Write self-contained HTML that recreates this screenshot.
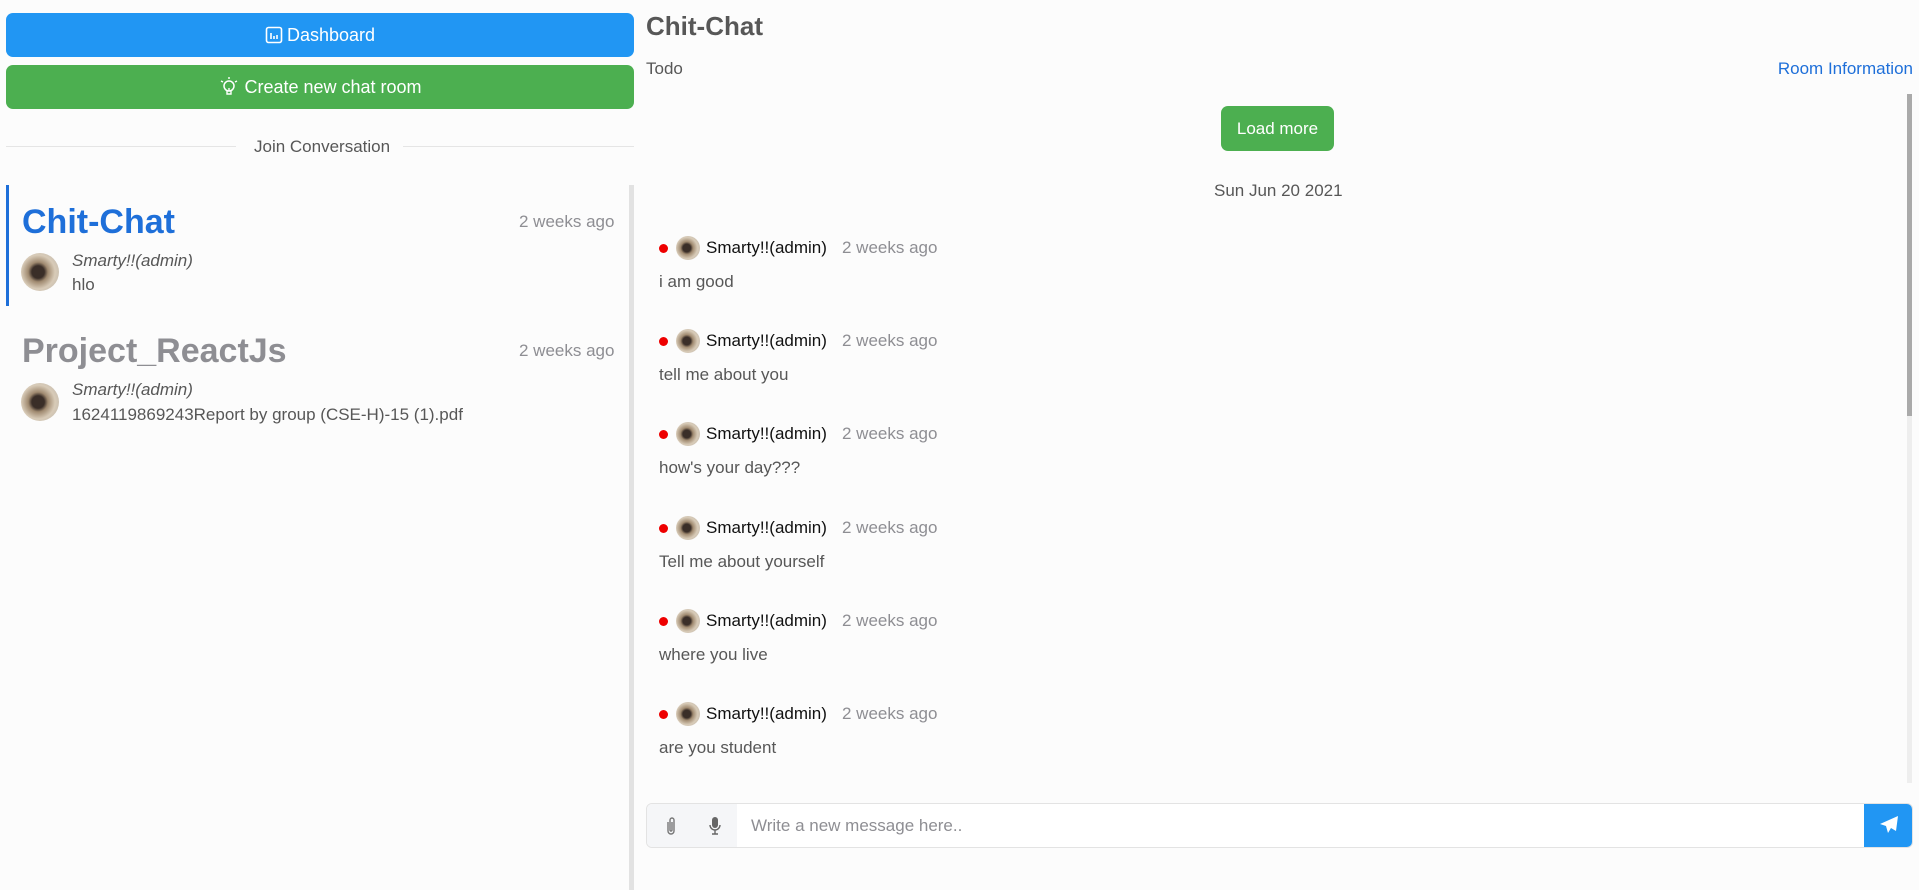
<!DOCTYPE html>
<html><head><meta charset="utf-8"><style>
*{box-sizing:border-box;margin:0;padding:0}
body{width:1919px;height:890px;background:#fcfcfc;font-family:"Liberation Sans",sans-serif;color:#575757;position:relative;overflow:hidden}
.abs{position:absolute}
.btn{position:absolute;left:6px;width:628px;height:44px;border-radius:7px;color:#fff;font-size:18px;display:flex;align-items:center;justify-content:center;gap:4px}
.av{position:absolute;border-radius:50%;background:radial-gradient(circle at 45% 50%,#3a2e28 0 22%,#a08a70 35%,#d8cbb8 60%,#b9b2a8 100%)}
.t{position:absolute;white-space:nowrap}
.dot{position:absolute;width:9px;height:9px;border-radius:50%;background:#e00}
</style></head><body>
<div class="btn" style="top:13px;background:#2196f3"><svg width="18" height="18" viewBox="0 0 18 18"><rect x="1.5" y="1.5" width="15" height="15" rx="2" fill="none" stroke="#fff" stroke-width="1.6"/><path d="M6 7v6M9 10v3M12 9v4" stroke="#fff" stroke-width="1.6"/></svg>Dashboard</div>
<div class="btn" style="top:65px;background:#4caf50"><svg width="22" height="22" viewBox="0 0 22 22"><circle cx="11" cy="10" r="5" fill="none" stroke="#fff" stroke-width="1.5"/><path d="M9 15v3h4v-3M11 12v3M3 5l2 1M19 5l-2 1M11 1v2" stroke="#fff" stroke-width="1.4" fill="none"/></svg> Create new chat room</div>
<div class="abs" style="left:6px;top:146px;width:230px;height:1px;background:#e5e5e5"></div>
<div class="abs" style="left:403px;top:146px;width:231px;height:1px;background:#e5e5e5"></div>
<div class="t" style="left:254px;top:137px;font-size:17px">Join Conversation</div>
<div class="abs" style="left:6px;top:185px;width:3px;height:121px;background:#1e6fd9"></div>
<div class="abs" style="left:629px;top:185px;width:5px;height:705px;background:#e2e2e2"></div>
<div class="t" style="left:22px;top:203px;font-size:34px;font-weight:bold;color:#1e6fd9">Chit-Chat</div>
<div class="t" style="left:519px;top:212px;font-size:17px;color:#8e8e93">2 weeks ago</div>
<div class="av" style="left:21px;top:253px;width:38px;height:38px"></div>
<div class="t" style="left:72px;top:251px;font-size:17px;font-style:italic">Smarty!!(admin)</div>
<div class="t" style="left:72px;top:275px;font-size:17px">hlo</div>
<div class="t" style="left:22px;top:332px;font-size:34px;font-weight:bold;color:#8e8e93">Project_ReactJs</div>
<div class="t" style="left:519px;top:341px;font-size:17px;color:#8e8e93">2 weeks ago</div>
<div class="av" style="left:21px;top:383px;width:38px;height:38px"></div>
<div class="t" style="left:72px;top:380px;font-size:17px;font-style:italic">Smarty!!(admin)</div>
<div class="t" style="left:72px;top:405px;font-size:17px">1624119869243Report by group (CSE-H)-15 (1).pdf</div>

<div class="t" style="left:646px;top:11px;font-size:26px;font-weight:bold">Chit-Chat</div>
<div class="t" style="left:646px;top:59px;font-size:17px">Todo</div>
<div class="t" style="right:6px;top:59px;font-size:17px;color:#1e6fd9">Room Information</div>
<div class="abs" style="left:1907px;top:94px;width:5px;height:689px;background:#eee"></div>
<div class="abs" style="left:1907px;top:94px;width:5px;height:322px;background:#aaa"></div>
<div class="abs" style="left:1221px;top:106px;width:113px;height:45px;background:#4caf50;border-radius:7px;color:#fff;font-size:17px;display:flex;align-items:center;justify-content:center">Load more</div>
<div class="t" style="left:1214px;top:181px;font-size:17px">Sun Jun 20 2021</div>

<div id="msgs"></div>
<script>
var m=["i am good","tell me about you","how's your day???","Tell me about yourself","where you live","are you student"],h="";
m.forEach(function(s,i){var y=248+i*93.2;
h+='<div class="dot" style="left:659px;top:'+(y-4)+'px"></div><div class="av" style="left:676px;top:'+(y-12)+'px;width:24px;height:24px"></div><div class="t" style="left:706px;top:'+(y-10)+'px;font-size:17px;color:#111">Smarty!!(admin)</div><div class="t" style="left:842px;top:'+(y-10)+'px;font-size:17px;color:#8e8e93">2 weeks ago</div><div class="t" style="left:659px;top:'+(y+24)+'px;font-size:17px">'+s+'</div>';});
document.getElementById('msgs').innerHTML=h;
</script>

<div class="abs" style="left:646px;top:803px;width:1267px;height:45px;border:1px solid #e3e3e3;border-radius:6px;background:#fff;overflow:hidden">
<div class="abs" style="left:0;top:0;width:90px;height:43px;background:#f5f6f8"></div>
<svg class="abs" style="left:18px;top:12px" width="12" height="20" viewBox="0 0 12 20"><path d="M3 6v9a3 3 0 0 0 6 0V4a2 2 0 0 0-4 0v10a1 1 0 0 0 2 0V6" fill="none" stroke="#777" stroke-width="1.4"/></svg>
<svg class="abs" style="left:62px;top:12px" width="12" height="20" viewBox="0 0 12 20"><rect x="3" y="1" width="6" height="11" rx="3" fill="#666"/><path d="M1 9a5 5 0 0 0 10 0M6 14v4M3 18h6" fill="none" stroke="#666" stroke-width="1.4"/></svg>
<div class="t" style="left:104px;top:12px;font-size:17px;color:#8e8e93">Write a new message here..</div>
<div class="abs" style="right:0;top:0;width:48px;height:43px;background:#2196f3"></div>
<svg class="abs" style="right:13px;top:11px" width="20" height="20" viewBox="0 0 20 20"><path d="M19 1L1 9l6 2 2 7 3-5 5 3z" fill="#fff"/></svg>
</div>
</body></html>
